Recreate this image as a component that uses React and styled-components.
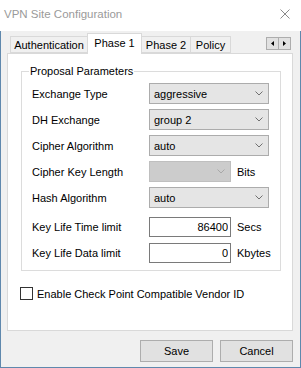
import styled, { createGlobalStyle } from "styled-components";

const GlobalStyle = createGlobalStyle`
  html, body {
    margin: 0;
    padding: 0;
    background: #ffffff;
  }
  body {
    font-family: "Liberation Sans", Arial, sans-serif;
    font-size: 11px;
    color: #000000;
  }
  * {
    box-sizing: border-box;
  }
`;

const selectRows = [
  { label: "Exchange Type", value: "aggressive" },
  { label: "DH Exchange", value: "group 2" },
  { label: "Cipher Algorithm", value: "auto" },
  { label: "Cipher Key Length", value: "", disabled: true, unit: "Bits" },
  { label: "Hash Algorithm", value: "auto" },
];

const inputRows = [
  { label: "Key Life Time limit", value: "86400", unit: "Secs" },
  { label: "Key Life Data limit", value: "0", unit: "Kbytes" },
];

const tabs = [
  { name: "Authentication", width: 78 },
  { name: "Phase 1", width: 55, active: true },
  { name: "Phase 2", width: 50 },
  { name: "Policy", width: 41 },
];

const Chevron = ({ color }) => (
  <svg width="8" height="5" viewBox="0 0 8 5">
    <path d="M0.5 0.5 L4 4 L7.5 0.5" fill="none" stroke={color} strokeWidth="1" />
  </svg>
);

const App = () => {
  return (
    <>
      <GlobalStyle />
      <Window>
        <TitleBar>
          <Title>VPN Site Configuration</Title>
          <Close>
            <svg width="10" height="10" viewBox="0 0 10 10">
              <path d="M0.5 0.5 L9.5 9.5 M9.5 0.5 L0.5 9.5" stroke="#8a8a8a" strokeWidth="1" />
            </svg>
          </Close>
        </TitleBar>

        <Body>
          <TabStrip>
            {tabs.map((t) => (
              <Tab key={t.name} $active={t.active} $width={t.width}>
                {t.name}
              </Tab>
            ))}
            <Scroller>
              <ScrollBtn>
                <svg width="3" height="5" viewBox="0 0 3 5">
                  <path d="M3 0 L0 2.5 L3 5 Z" fill="#000" />
                </svg>
              </ScrollBtn>
              <ScrollBtn>
                <svg width="3" height="5" viewBox="0 0 3 5">
                  <path d="M0 0 L3 2.5 L0 5 Z" fill="#000" />
                </svg>
              </ScrollBtn>
            </Scroller>
          </TabStrip>

          <Panel>
            <Group>
              <Legend>Proposal Parameters</Legend>
              <Rows $gap={5}>
                {selectRows.map((r) => (
                  <Row key={r.label} $height={21}>
                    <Label>{r.label}</Label>
                    <Dropdown $disabled={r.disabled}>
                      <span>{r.value}</span>
                      <Chevron color={r.disabled ? "#a8a8a8" : "#707070"} />
                    </Dropdown>
                    {r.unit && <Unit>{r.unit}</Unit>}
                  </Row>
                ))}
              </Rows>
              <Rows $gap={6} $top={9}>
                {inputRows.map((r) => (
                  <Row key={r.label} $height={20}>
                    <Label>{r.label}</Label>
                    <Field defaultValue={r.value} />
                    <Unit>{r.unit}</Unit>
                  </Row>
                ))}
              </Rows>
            </Group>

            <CheckRow>
              <CheckBox />
              <span>Enable Check Point Compatible Vendor ID</span>
            </CheckRow>
          </Panel>

          <Footer>
            <Button>Save</Button>
            <Button>Cancel</Button>
          </Footer>
        </Body>
      </Window>
    </>
  );
};

export default App;

const Window = styled.div`
  width: 301px;
  height: 368px;
  display: flex;
  flex-direction: column;
  background: #ffffff;
`;

const TitleBar = styled.div`
  height: 31px;
  display: flex;
  align-items: flex-start;
  justify-content: space-between;
  padding: 7px 11px 0 4px;
  background: #ffffff;
`;

const Title = styled.div`
  font-size: 11.5px;
  line-height: 14px;
  color: #9a9a9a;
`;

const Close = styled.div`
  margin-top: 2px;
  display: flex;
`;

const Body = styled.div`
  flex: 1;
  display: flex;
  flex-direction: column;
  background: #f0f0f0;
  border: 1px solid #5f88ad;
  border-top: none;
  padding: 2px 7px 0 6px;
`;

const TabStrip = styled.div`
  height: 21px;
  display: flex;
  align-items: flex-end;
  padding-left: 3px;
`;

const Tab = styled.div`
  position: relative;
  width: ${(p) => p.$width}px;
  height: ${(p) => (p.$active ? 21 : 17)}px;
  margin-bottom: ${(p) => (p.$active ? 0 : 1)}px;
  margin-left: -1px;
  padding-top: ${(p) => (p.$active ? 3 : 2)}px;
  border: 1px solid #d9d9d9;
  border-bottom: ${(p) => (p.$active ? "none" : "1px solid #d9d9d9")};
  background: ${(p) => (p.$active ? "#ffffff" : "#f0f0f0")};
  z-index: ${(p) => (p.$active ? 2 : 0)};
  text-align: center;
  line-height: 13px;
  white-space: nowrap;

  &:first-child {
    margin-left: 0;
  }
`;

const Scroller = styled.div`
  align-self: flex-start;
  margin: 4px 2px 0 auto;
  display: flex;
`;

const ScrollBtn = styled.div`
  width: 13px;
  height: 13px;
  margin-left: -1px;
  display: flex;
  align-items: center;
  justify-content: center;
  background: #e1e1e1;
  border: 1px solid #adadad;
`;

const Panel = styled.div`
  position: relative;
  z-index: 1;
  height: 278px;
  margin-top: -1px;
  background: #ffffff;
  border: 1px solid #d9d9d9;
  display: flex;
  flex-direction: column;
`;

const Group = styled.fieldset`
  width: 260px;
  margin: 10px 0 0 13px;
  padding: 5px 11px 7px 10px;
  border: 1px solid #dcdcdc;
  min-width: 0;
`;

const Legend = styled.legend`
  margin-left: -3px;
  padding: 0 1px;
  line-height: 14px;
`;

const Rows = styled.div`
  display: flex;
  flex-direction: column;
  gap: ${(p) => p.$gap}px;
  margin-top: ${(p) => p.$top || 0}px;
`;

const Row = styled.div`
  height: ${(p) => p.$height}px;
  display: flex;
  align-items: center;
`;

const Label = styled.div`
  width: 117px;
  flex-shrink: 0;
`;

const Dropdown = styled.div`
  width: ${(p) => (p.$disabled ? 82 : 120)}px;
  height: 21px;
  display: flex;
  align-items: center;
  justify-content: space-between;
  padding: 0 5px 0 4px;
  background: ${(p) => (p.$disabled ? "#cccccc" : "#e5e5e5")};
  border: 1px solid ${(p) => (p.$disabled ? "#bfbfbf" : "#acacac")};
`;

const Field = styled.input`
  width: 82px;
  height: 20px;
  padding: 0 2px 0 2px;
  border: 1px solid #7a7a7a;
  background: #ffffff;
  text-align: right;
  font: inherit;
  color: #000000;
  outline: none;
`;

const Unit = styled.span`
  margin-left: 6px;
`;

const CheckRow = styled.label`
  display: flex;
  align-items: center;
  gap: 4px;
  margin: 15px 0 0 12px;
  height: 15px;
`;

const CheckBox = styled.span`
  width: 13px;
  height: 13px;
  border: 1px solid #333333;
  background: #ffffff;
`;

const Footer = styled.div`
  display: flex;
  justify-content: flex-end;
  gap: 7px;
  padding-top: 9px;
`;

const Button = styled.div`
  width: 73px;
  height: 22px;
  display: flex;
  align-items: center;
  justify-content: center;
  background: #e1e1e1;
  border: 1px solid #adadad;
`;
